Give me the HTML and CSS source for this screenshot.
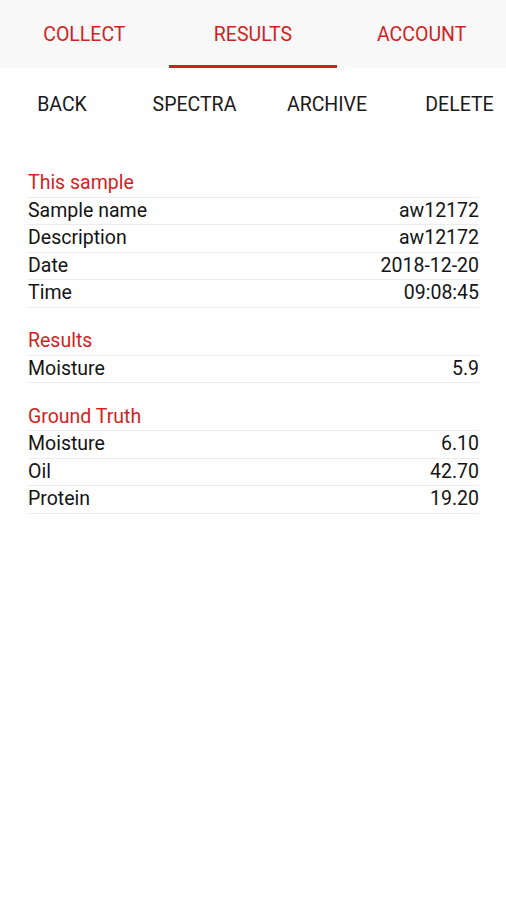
FILE: index.html
```html
<!DOCTYPE html>
<html>
<head>
<meta charset="utf-8">
<link rel="stylesheet" href="styles.css">
</head>
<body>
<div class="tabs">
  <div class="tab">COLLECT</div>
  <div class="tab active">RESULTS</div>
  <div class="tab">ACCOUNT</div>
</div>
<div class="actions">
  <div class="btn">BACK</div>
  <div class="btn">SPECTRA</div>
  <div class="btn">ARCHIVE</div>
  <div class="btn">DELETE</div>
</div>
<div class="content">
  <div class="section">
    <div class="head">This sample</div>
    <div class="row"><span>Sample name</span><span>aw12172</span></div>
    <div class="row"><span>Description</span><span>aw12172</span></div>
    <div class="row"><span>Date</span><span>2018-12-20</span></div>
    <div class="row"><span>Time</span><span>09:08:45</span></div>
  </div>
  <div class="section">
    <div class="head">Results</div>
    <div class="row"><span>Moisture</span><span>5.9</span></div>
  </div>
  <div class="section">
    <div class="head">Ground Truth</div>
    <div class="row"><span>Moisture</span><span>6.10</span></div>
    <div class="row"><span>Oil</span><span>42.70</span></div>
    <div class="row"><span>Protein</span><span>19.20</span></div>
  </div>
</div>
</body>
</html>
```
FILE: styles.css
```css
html, body {
  margin: 0;
  padding: 0;
  background: #ffffff;
  font-family: Roboto, "Liberation Sans", sans-serif;
}
.tabs {
  display: grid;
  grid-template-columns: 1fr 1fr 1fr;
  background: #f8f8f8;
  height: 68px;
}
.tab {
  color: #d21f1f;
  font-size: 19.5px;
  line-height: 22px;
  text-align: center;
  height: 68px;
  box-sizing: border-box;
  padding-top: 24px;
}
.tab.active {
  border-bottom: 3px solid #d21f1f;
}
.actions {
  display: grid;
  grid-template-columns: repeat(4, 92px);
  column-gap: 40.5px;
  padding-left: 16px;
  padding-top: 13px;
}
.btn {
  height: 48px;
  line-height: 48px;
  text-align: center;
  font-size: 19.5px;
  color: #1a1a1a;
  white-space: nowrap;
}
.content {
  margin: 41px 27px 0 28px;
}
.section {
  margin-bottom: 20.5px;
}
.head, .row {
  line-height: 26.5px;
  font-size: 19.5px;
  border-bottom: 1px solid #ececec;
}
.head {
  color: #d21f1f;
}
.row {
  display: flex;
  justify-content: space-between;
  color: #141414;
}
```
